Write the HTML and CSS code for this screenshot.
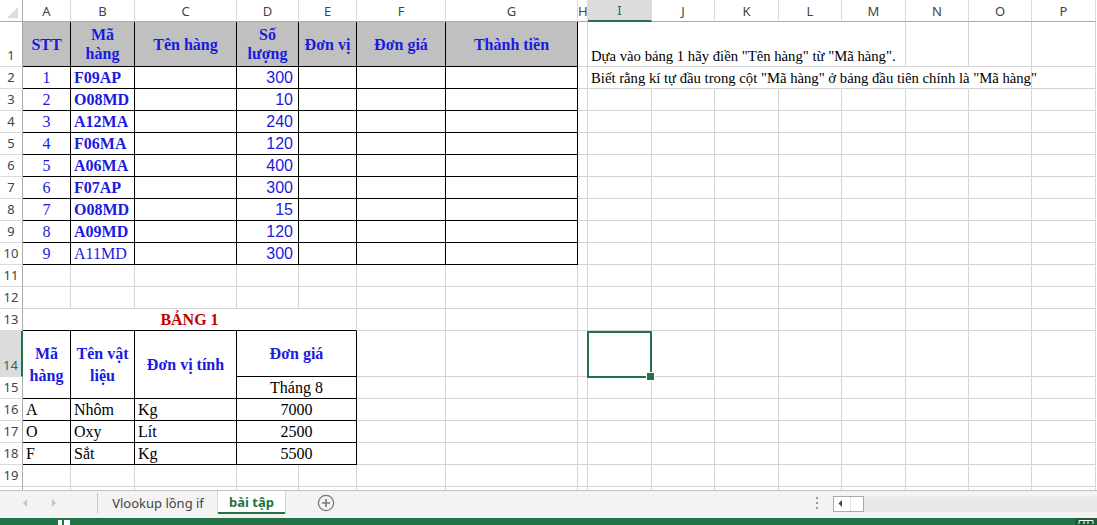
FILE: index.html
```html
<!DOCTYPE html>
<html lang="vi">
<head>
<meta charset="utf-8">
<title>bài tập</title>
<link rel="stylesheet" href="styles.css">
</head>
<body>
<div class="app">
  <div class="sheet">
    <table class="grid">
      <colgroup>
        <col class="w23"><col class="w48"><col class="w64"><col class="w102"><col class="w62"><col class="w58"><col class="w89"><col class="w132"><col class="w10"><col class="w64"><col class="w63"><col class="w64"><col class="w63"><col class="w64"><col class="w63"><col class="w63"><col class="w64">
      </colgroup>
      <thead>
        <tr class="hr">
          <th class="corner"><svg width="23" height="21" viewBox="0 0 23 21"><polygon points="18,7 18,18 7,18" fill="#dcdcdc"/></svg></th>
          <th class="ch">A</th><th class="ch">B</th><th class="ch">C</th><th class="ch">D</th><th class="ch">E</th><th class="ch">F</th><th class="ch">G</th><th class="ch">H</th><th class="ch cur">I</th><th class="ch">J</th><th class="ch">K</th><th class="ch">L</th><th class="ch">M</th><th class="ch">N</th><th class="ch">O</th><th class="ch">P</th>
        </tr>
      </thead>
      <tbody>
        <tr class="r45">
          <th class="rh kr">1</th>
          <td class="hd kr kb">STT</td>
          <td class="hd kr kb">Mã<br>hàng</td>
          <td class="hd kr kb">Tên hàng</td>
          <td class="hd kr kb">Số<br>lượng</td>
          <td class="hd kr kb">Đơn vị</td>
          <td class="hd kr kb">Đơn giá</td>
          <td class="hd kr kb">Thành tiền</td>
          <td></td>
          <td class="note nr">Dựa vào bảng 1 hãy điền "Tên hàng" từ "Mã hàng".</td>
          <td class="nr"></td><td class="nr"></td><td class="nr"></td><td></td><td></td><td></td><td></td>
        </tr>
        <tr>
          <th class="rh kr">2</th>
          <td class="stt kr kb">1</td><td class="code kr kb">F09AP</td><td class="kr kb"></td><td class="qty kr kb">300</td><td class="kr kb"></td><td class="kr kb"></td><td class="kr kb"></td>
          <td></td>
          <td class="note nr">Biết rằng kí tự đầu trong cột "Mã hàng" ở bảng đầu tiên chính là "Mã hàng"</td>
          <td class="nr"></td><td class="nr"></td><td class="nr"></td><td class="nr"></td><td class="nr"></td><td></td><td></td>
        </tr>
        <tr>
          <th class="rh kr">3</th>
          <td class="stt kr kb">2</td><td class="code kr kb">O08MD</td><td class="kr kb"></td><td class="qty kr kb">10</td><td class="kr kb"></td><td class="kr kb"></td><td class="kr kb"></td>
          <td></td><td></td><td></td><td></td><td></td><td></td><td></td><td></td><td></td>
        </tr>
        <tr>
          <th class="rh kr">4</th>
          <td class="stt kr kb">3</td><td class="code kr kb">A12MA</td><td class="kr kb"></td><td class="qty kr kb">240</td><td class="kr kb"></td><td class="kr kb"></td><td class="kr kb"></td>
          <td></td><td></td><td></td><td></td><td></td><td></td><td></td><td></td><td></td>
        </tr>
        <tr>
          <th class="rh kr">5</th>
          <td class="stt kr kb">4</td><td class="code kr kb">F06MA</td><td class="kr kb"></td><td class="qty kr kb">120</td><td class="kr kb"></td><td class="kr kb"></td><td class="kr kb"></td>
          <td></td><td></td><td></td><td></td><td></td><td></td><td></td><td></td><td></td>
        </tr>
        <tr>
          <th class="rh kr">6</th>
          <td class="stt kr kb">5</td><td class="code kr kb">A06MA</td><td class="kr kb"></td><td class="qty kr kb">400</td><td class="kr kb"></td><td class="kr kb"></td><td class="kr kb"></td>
          <td></td><td></td><td></td><td></td><td></td><td></td><td></td><td></td><td></td>
        </tr>
        <tr>
          <th class="rh kr">7</th>
          <td class="stt kr kb">6</td><td class="code kr kb">F07AP</td><td class="kr kb"></td><td class="qty kr kb">300</td><td class="kr kb"></td><td class="kr kb"></td><td class="kr kb"></td>
          <td></td><td></td><td></td><td></td><td></td><td></td><td></td><td></td><td></td>
        </tr>
        <tr>
          <th class="rh kr">8</th>
          <td class="stt kr kb">7</td><td class="code kr kb">O08MD</td><td class="kr kb"></td><td class="qty kr kb">15</td><td class="kr kb"></td><td class="kr kb"></td><td class="kr kb"></td>
          <td></td><td></td><td></td><td></td><td></td><td></td><td></td><td></td><td></td>
        </tr>
        <tr>
          <th class="rh kr">9</th>
          <td class="stt kr kb">8</td><td class="code kr kb">A09MD</td><td class="kr kb"></td><td class="qty kr kb">120</td><td class="kr kb"></td><td class="kr kb"></td><td class="kr kb"></td>
          <td></td><td></td><td></td><td></td><td></td><td></td><td></td><td></td><td></td>
        </tr>
        <tr>
          <th class="rh kr">10</th>
          <td class="stt kr kb">9</td><td class="code plain kr kb">A11MD</td><td class="kr kb"></td><td class="qty kr kb">300</td><td class="kr kb"></td><td class="kr kb"></td><td class="kr kb"></td>
          <td></td><td></td><td></td><td></td><td></td><td></td><td></td><td></td><td></td>
        </tr>
        <tr>
          <th class="rh">11</th>
          <td></td><td></td><td></td><td></td><td></td><td></td><td></td><td></td><td></td><td></td><td></td><td></td><td></td><td></td><td></td><td></td>
        </tr>
        <tr>
          <th class="rh">12</th>
          <td></td><td></td><td></td><td></td><td></td><td></td><td></td><td></td><td></td><td></td><td></td><td></td><td></td><td></td><td></td><td></td>
        </tr>
        <tr>
          <th class="rh">13</th>
          <td class="title kb" colspan="5">BẢNG 1</td>
          <td></td><td></td><td></td><td></td><td></td><td></td><td></td><td></td><td></td><td></td><td></td>
        </tr>
        <tr class="r46">
          <th class="rh rsel">14</th>
          <td class="hd2 kr kb" rowspan="2">Mã<br>hàng</td>
          <td class="hd2 kr kb" rowspan="2">Tên vật<br>liệu</td>
          <td class="hd2 kr kb" rowspan="2">Đơn vị tính</td>
          <td class="hd2 kr kb" colspan="2">Đơn giá</td>
          <td></td><td></td><td></td>
          <td class="sel"></td>
          <td></td><td></td><td></td><td></td><td></td><td></td><td></td>
        </tr>
        <tr>
          <th class="rh kr">15</th>
          <td class="ctr kr kb" colspan="2">Tháng 8</td>
          <td></td><td></td><td></td><td></td><td></td><td></td><td></td><td></td><td></td><td></td><td></td>
        </tr>
        <tr>
          <th class="rh kr">16</th>
          <td class="kr kb">A</td><td class="kr kb">Nhôm</td><td class="kr kb">Kg</td><td class="ctr kr kb" colspan="2">7000</td>
          <td></td><td></td><td></td><td></td><td></td><td></td><td></td><td></td><td></td><td></td><td></td>
        </tr>
        <tr>
          <th class="rh kr">17</th>
          <td class="kr kb">O</td><td class="kr kb">Oxy</td><td class="kr kb">Lít</td><td class="ctr kr kb" colspan="2">2500</td>
          <td></td><td></td><td></td><td></td><td></td><td></td><td></td><td></td><td></td><td></td><td></td>
        </tr>
        <tr>
          <th class="rh kr">18</th>
          <td class="kr kb">F</td><td class="kr kb">Sắt</td><td class="kr kb">Kg</td><td class="ctr kr kb" colspan="2">5500</td>
          <td></td><td></td><td></td><td></td><td></td><td></td><td></td><td></td><td></td><td></td><td></td>
        </tr>
        <tr>
          <th class="rh">19</th>
          <td></td><td></td><td></td><td></td><td></td><td></td><td></td><td></td><td></td><td></td><td></td><td></td><td></td><td></td><td></td><td></td>
        </tr>
        <tr>
          <th class="rh"></th>
          <td></td><td></td><td></td><td></td><td></td><td></td><td></td><td></td><td></td><td></td><td></td><td></td><td></td><td></td><td></td><td></td>
        </tr>
      </tbody>
    </table>
  </div>

  <div class="tabs">
    <div class="nav">
      <svg width="6" height="8" viewBox="0 0 6 8"><polygon points="5,0 5,8 1,4" fill="#c4c4c4"/></svg>
      <svg width="6" height="8" viewBox="0 0 6 8"><polygon points="1,0 1,8 5,4" fill="#c4c4c4"/></svg>
    </div>
    <div class="sep"></div>
    <div class="tab">Vlookup lồng if</div>
    <div class="tab on">bài tập</div>
    <div class="add">
      <svg width="18" height="18" viewBox="0 0 18 18"><circle cx="9" cy="9" r="7.6" fill="none" stroke="#7a7a7a" stroke-width="1.3"/><path d="M9 5v8M5 9h8" stroke="#7a7a7a" stroke-width="1.6"/></svg>
    </div>
    <div class="split">
      <svg width="3" height="14" viewBox="0 0 3 14"><rect x="0" y="1" width="2" height="2" fill="#9a9a9a"/><rect x="0" y="6" width="2" height="2" fill="#9a9a9a"/><rect x="0" y="11" width="2" height="2" fill="#9a9a9a"/></svg>
    </div>
    <div class="hscroll">
      <div class="sbtn">
        <svg width="16" height="13" viewBox="0 0 16 13"><polygon points="8,3 8,10 4.5,6.5" fill="#444"/></svg>
        <div class="thumb"></div>
      </div>
      <div class="track"></div>
    </div>
  </div>

  <div class="status">
    <svg class="macro" width="14" height="7" viewBox="0 0 14 7"><rect x="1" y="2" width="4" height="5" fill="#fff"/><rect x="7" y="2" width="6" height="5" fill="#fff"/></svg>
    <div class="view">
      <svg width="16" height="6" viewBox="0 0 16 6"><path d="M1 2.5h14M1 2.5v4M6 2.5v4M10 2.5v4M15 2.5v4" stroke="#fff" stroke-width="1" fill="none"/></svg>
    </div>
  </div>
</div>
</body>
</html>
```

FILE: styles.css
```css
* { box-sizing: border-box; }

html, body {
  margin: 0;
  padding: 0;
}

body {
  width: 1097px;
  height: 525px;
  overflow: hidden;
  background: #fff;
  font-family: "Liberation Serif", "Times New Roman", serif;
}

.app {
  display: flex;
  flex-direction: column;
  width: 1097px;
  height: 525px;
}

.sheet {
  flex: none;
  height: 490px;
  overflow: hidden;
}

/* grid */
.grid {
  border-collapse: separate;
  border-spacing: 0;
  table-layout: fixed;
  width: 1096px;
}

.w23 { width: 23px; }
.w48 { width: 48px; }
.w64 { width: 64px; }
.w102 { width: 102px; }
.w62 { width: 62px; }
.w58 { width: 58px; }
.w89 { width: 89px; }
.w132 { width: 132px; }
.w10 { width: 10px; }
.w63 { width: 63px; }

.grid tr { height: 22px; }
.grid tr.hr { height: 21px; }
.grid tr.r45 { height: 45px; }
.grid tr.r46 { height: 46px; }

.grid td,
.grid th {
  padding: 0 3px 1px;
  border: 0;
  border-right: 1px solid #d4d4d4;
  border-bottom: 1px solid #d4d4d4;
  white-space: nowrap;
  overflow: visible;
  font-size: 16px;
  line-height: 18px;
  font-weight: normal;
  text-align: left;
  vertical-align: bottom;
  color: #000;
}

/* headers */
.grid th.corner {
  padding: 0;
  border-right: 1px solid #ababab;
  border-bottom: 1px solid #ababab;
  vertical-align: top;
}
.corner svg { display: block; }

.grid th.ch {
  padding: 0;
  font-family: "Noto Sans", "Open Sans", sans-serif;
  font-size: 13px;
  line-height: 20px;
  color: #444;
  text-align: center;
  vertical-align: middle;
  border-right: 1px solid #dadada;
  border-bottom: 1px solid #ababab;
}
.grid th.ch.cur {
  background: #dcdcdc;
  color: #217346;
  border-bottom: 2px solid #217346;
}

.grid th.rh {
  padding: 0 0 2px;
  font-family: "Noto Sans", "Open Sans", sans-serif;
  font-size: 13px;
  line-height: 18px;
  color: #444;
  text-align: center;
  vertical-align: bottom;
  border-right: 1px solid #ababab;
  border-bottom: 1px solid #dadada;
}
.grid th.rh.rsel {
  background: #dcdcdc;
  color: #217346;
  border-right: 2px solid #217346;
}

/* borders */
.grid .kr { border-right-color: #000; }
.grid .kb { border-bottom-color: #000; }
.grid .nr { border-right-color: transparent; }

/* cell styles */
.grid td.hd {
  background: #c0c0c0;
  color: #1a1ae0;
  font-weight: bold;
  text-align: center;
  vertical-align: middle;
  line-height: 19px;
  padding: 0 2px;
}

.grid td.hd2 {
  color: #1a1ae0;
  font-weight: bold;
  text-align: center;
  vertical-align: middle;
  line-height: 22px;
  padding: 0 2px;
}

.grid td.stt {
  color: #1a1ae0;
  text-align: center;
}

.grid td.code {
  color: #1a1ae0;
  font-weight: bold;
}
.grid td.code.plain { font-weight: normal; }

.grid td.qty {
  color: #1a1ae0;
  font-family: "Liberation Sans", Arial, sans-serif;
  text-align: right;
  padding-right: 5px;
}

.grid td.ctr { text-align: center; }

.grid td.title {
  color: #c00000;
  font-weight: bold;
  text-align: center;
}

.grid td.note {
  font-size: 14.7px;
  padding-left: 3px;
}

.grid td.sel { position: relative; }
.grid td.sel::after {
  content: "";
  position: absolute;
  left: -1px;
  top: 0;
  right: -1px;
  bottom: -2px;
  border: 2px solid #217346;
}
.grid td.sel::before {
  content: "";
  position: absolute;
  right: -4px;
  bottom: -5px;
  width: 7px;
  height: 7px;
  background: #217346;
  border: 1px solid #fff;
  z-index: 1;
}

/* sheet tabs bar */
.tabs {
  flex: none;
  height: 28px;
  display: flex;
  align-items: stretch;
  background: #f3f3f3;
  border-top: 1px solid #c3c3c3;
  padding-bottom: 4px;
  font-family: "Noto Sans", "Open Sans", sans-serif;
  font-size: 13px;
  color: #444;
}

.nav {
  width: 97px;
  display: flex;
  align-items: center;
  padding-left: 22px;
  gap: 23px;
}
.nav svg { display: block; }

.sep {
  width: 1px;
  background: #c6c6c6;
  margin: 2px 0 1px;
}

.tab {
  width: 120px;
  display: flex;
  align-items: center;
  justify-content: center;
}

.tab.on {
  width: 67px;
  background: #fff;
  color: #217346;
  font-weight: bold;
  border-bottom: 2px solid #217346;
  box-shadow: 1px 0 0 #d6d6d6, -1px 0 0 #d6d6d6;
}

.add {
  width: 18px;
  margin-left: 32px;
  display: flex;
  align-items: center;
}
.add svg { display: block; }

.split {
  margin-left: auto;
  width: 17px;
  display: flex;
  align-items: center;
}
.split svg { display: block; }

.hscroll {
  width: 264px;
  display: flex;
  align-self: center;
  height: 16px;
  margin-top: 2px;
}

.sbtn {
  width: 31px;
  height: 16px;
  display: flex;
  background: #fff;
  border: 1px solid #ababab;
}
.sbtn svg { display: block; }
.thumb {
  flex: 1;
  border-left: 1px solid #e0e0e0;
}

.track {
  flex: 1;
  background: #e8e8e8;
  border-top: 1px solid #ededed;
}

/* status bar */
.status {
  flex: none;
  height: 7px;
  background: #217346;
  display: flex;
  align-items: flex-start;
  justify-content: space-between;
}
.macro {
  display: block;
  margin-left: 57px;
}
.view {
  width: 22px;
  height: 7px;
  background: #1a5e38;
  display: flex;
  justify-content: center;
}
.view svg { display: block; }
```
